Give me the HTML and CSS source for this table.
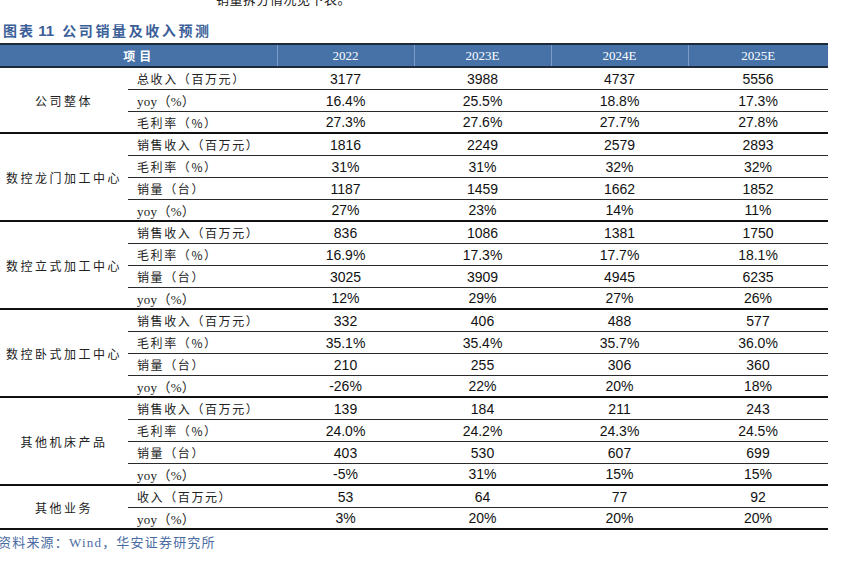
FILE: index.html
```html
<!DOCTYPE html>
<html lang="zh">
<head>
<meta charset="utf-8">
<link rel="stylesheet" href="styles.css">
</head>
<body>
<p class="intro">销量拆分情况见下表。</p>
<h1 class="title"><span class="t-lbl">图表</span> <span class="t-num">11</span> <span class="t-txt">公司销量及收入预测</span></h1>
<table class="tbl">
  <colgroup>
    <col class="c-grp"><col class="c-met"><col class="c-val"><col class="c-val"><col class="c-val"><col class="c-val-last">
  </colgroup>
  <thead>
    <tr><th colspan="2" class="h-item">项目</th><th>2022</th><th>2023E</th><th>2024E</th><th>2025E</th></tr>
  </thead>
  <tbody>
    <tr><td rowspan="3" class="grp">公司整体</td><td class="met">总收入（百万元）</td><td>3177</td><td>3988</td><td>4737</td><td>5556</td></tr>
    <tr><td class="met lat">yoy（%）</td><td>16.4%</td><td>25.5%</td><td>18.8%</td><td>17.3%</td></tr>
    <tr class="end"><td class="met">毛利率（%）</td><td>27.3%</td><td>27.6%</td><td>27.7%</td><td>27.8%</td></tr>

    <tr><td rowspan="4" class="grp">数控龙门加工中心</td><td class="met">销售收入（百万元）</td><td>1816</td><td>2249</td><td>2579</td><td>2893</td></tr>
    <tr><td class="met">毛利率（%）</td><td>31%</td><td>31%</td><td>32%</td><td>32%</td></tr>
    <tr><td class="met">销量（台）</td><td>1187</td><td>1459</td><td>1662</td><td>1852</td></tr>
    <tr class="end"><td class="met lat">yoy（%）</td><td>27%</td><td>23%</td><td>14%</td><td>11%</td></tr>

    <tr><td rowspan="4" class="grp">数控立式加工中心</td><td class="met">销售收入（百万元）</td><td>836</td><td>1086</td><td>1381</td><td>1750</td></tr>
    <tr><td class="met">毛利率（%）</td><td>16.9%</td><td>17.3%</td><td>17.7%</td><td>18.1%</td></tr>
    <tr><td class="met">销量（台）</td><td>3025</td><td>3909</td><td>4945</td><td>6235</td></tr>
    <tr class="end"><td class="met lat">yoy（%）</td><td>12%</td><td>29%</td><td>27%</td><td>26%</td></tr>

    <tr><td rowspan="4" class="grp">数控卧式加工中心</td><td class="met">销售收入（百万元）</td><td>332</td><td>406</td><td>488</td><td>577</td></tr>
    <tr><td class="met">毛利率（%）</td><td>35.1%</td><td>35.4%</td><td>35.7%</td><td>36.0%</td></tr>
    <tr><td class="met">销量（台）</td><td>210</td><td>255</td><td>306</td><td>360</td></tr>
    <tr class="end"><td class="met lat">yoy（%）</td><td>-26%</td><td>22%</td><td>20%</td><td>18%</td></tr>

    <tr><td rowspan="4" class="grp">其他机床产品</td><td class="met">销售收入（百万元）</td><td>139</td><td>184</td><td>211</td><td>243</td></tr>
    <tr><td class="met">毛利率（%）</td><td>24.0%</td><td>24.2%</td><td>24.3%</td><td>24.5%</td></tr>
    <tr><td class="met">销量（台）</td><td>403</td><td>530</td><td>607</td><td>699</td></tr>
    <tr class="end"><td class="met lat">yoy（%）</td><td>-5%</td><td>31%</td><td>15%</td><td>15%</td></tr>

    <tr><td rowspan="2" class="grp">其他业务</td><td class="met">收入（百万元）</td><td>53</td><td>64</td><td>77</td><td>92</td></tr>
    <tr class="end"><td class="met lat">yoy（%）</td><td>3%</td><td>20%</td><td>20%</td><td>20%</td></tr>
  </tbody>
</table>
<p class="source">资料来源：Wind，华安证券研究所</p>
</body>
</html>
```

FILE: styles.css
```css
html, body {
  margin: 0;
  padding: 0;
  background: #ffffff;
}
body {
  width: 846px;
  height: 561px;
  overflow: hidden;
  font-family: "Liberation Serif", "Noto Sans CJK SC", serif;
  color: #111;
}
.intro {
  margin: -8px 0 0 216px;
  height: 13px;
  font-size: 13px;
  line-height: 13px;
  letter-spacing: 0.5px;
  font-family: "Noto Sans CJK SC", sans-serif;
  color: #222;
}
.title {
  margin: 15px 0 3px 3px;
  height: 20px;
  line-height: 20px;
  font-size: 14px;
  font-weight: bold;
  color: #3b6098;
  font-family: "Noto Sans CJK SC", sans-serif;
  white-space: nowrap;
}
.t-lbl { letter-spacing: 2px; }
.t-num { font-family: "Liberation Sans", sans-serif; font-size: 15px; margin: 0 5px 0 0; }
.t-txt { letter-spacing: 2.6px; }

.tbl {
  border-collapse: collapse;
  width: 828px;
  table-layout: fixed;
}
.c-grp { width: 128px; }
.c-met { width: 149px; }
.c-val { width: 137px; }
.c-val-last { width: 140px; }

.tbl thead th {
  background: #4672a8;
  color: #ffffff;
  font-weight: normal;
  font-family: "Liberation Serif", serif;
  font-size: 13px;
  height: 21px;
  padding: 0;
  border-top: 2px solid #1d2a3a;
  border-bottom: 2px solid #1d2a3a;
  border-left: 1px solid #7d9bc4;
  text-align: center;
}
.tbl thead th:first-child { border-left: none; }
.tbl thead .h-item {
  font-family: "Noto Sans CJK SC", sans-serif;
  font-weight: bold;
  font-size: 12px;
  letter-spacing: 4px;
  padding-left: 2px;
}
.tbl td {
  height: 21px;
  padding: 0;
  border-bottom: 1px solid #2a2a2a;
  text-align: center;
  font-family: "Liberation Sans", sans-serif;
  font-size: 14px;
  color: #111;
}
.tbl tr.end td {
  height: 20px;
  border-bottom: 2px solid #111;
}
.tbl td.grp {
  border-bottom: 2px solid #111;
  font-family: "Noto Sans CJK SC", sans-serif;
  font-size: 12px;
  letter-spacing: 2.5px;
  color: #222;
}
.tbl td.met {
  text-align: left;
  padding-left: 9px;
  font-family: "Noto Sans CJK SC", sans-serif;
  font-size: 12px;
  letter-spacing: 1.6px;
  color: #222;
}
.tbl td.met.lat {
  font-family: "Liberation Serif", "Noto Sans CJK SC", serif;
  font-size: 13px;
  letter-spacing: 0.3px;
}
.source {
  margin: 5px 0 0 -2px;
  line-height: 16px;
  font-size: 13px;
  color: #4a6ca2;
  font-family: "Liberation Serif", "Noto Sans CJK SC", serif;
  letter-spacing: 1.2px;
}
```
